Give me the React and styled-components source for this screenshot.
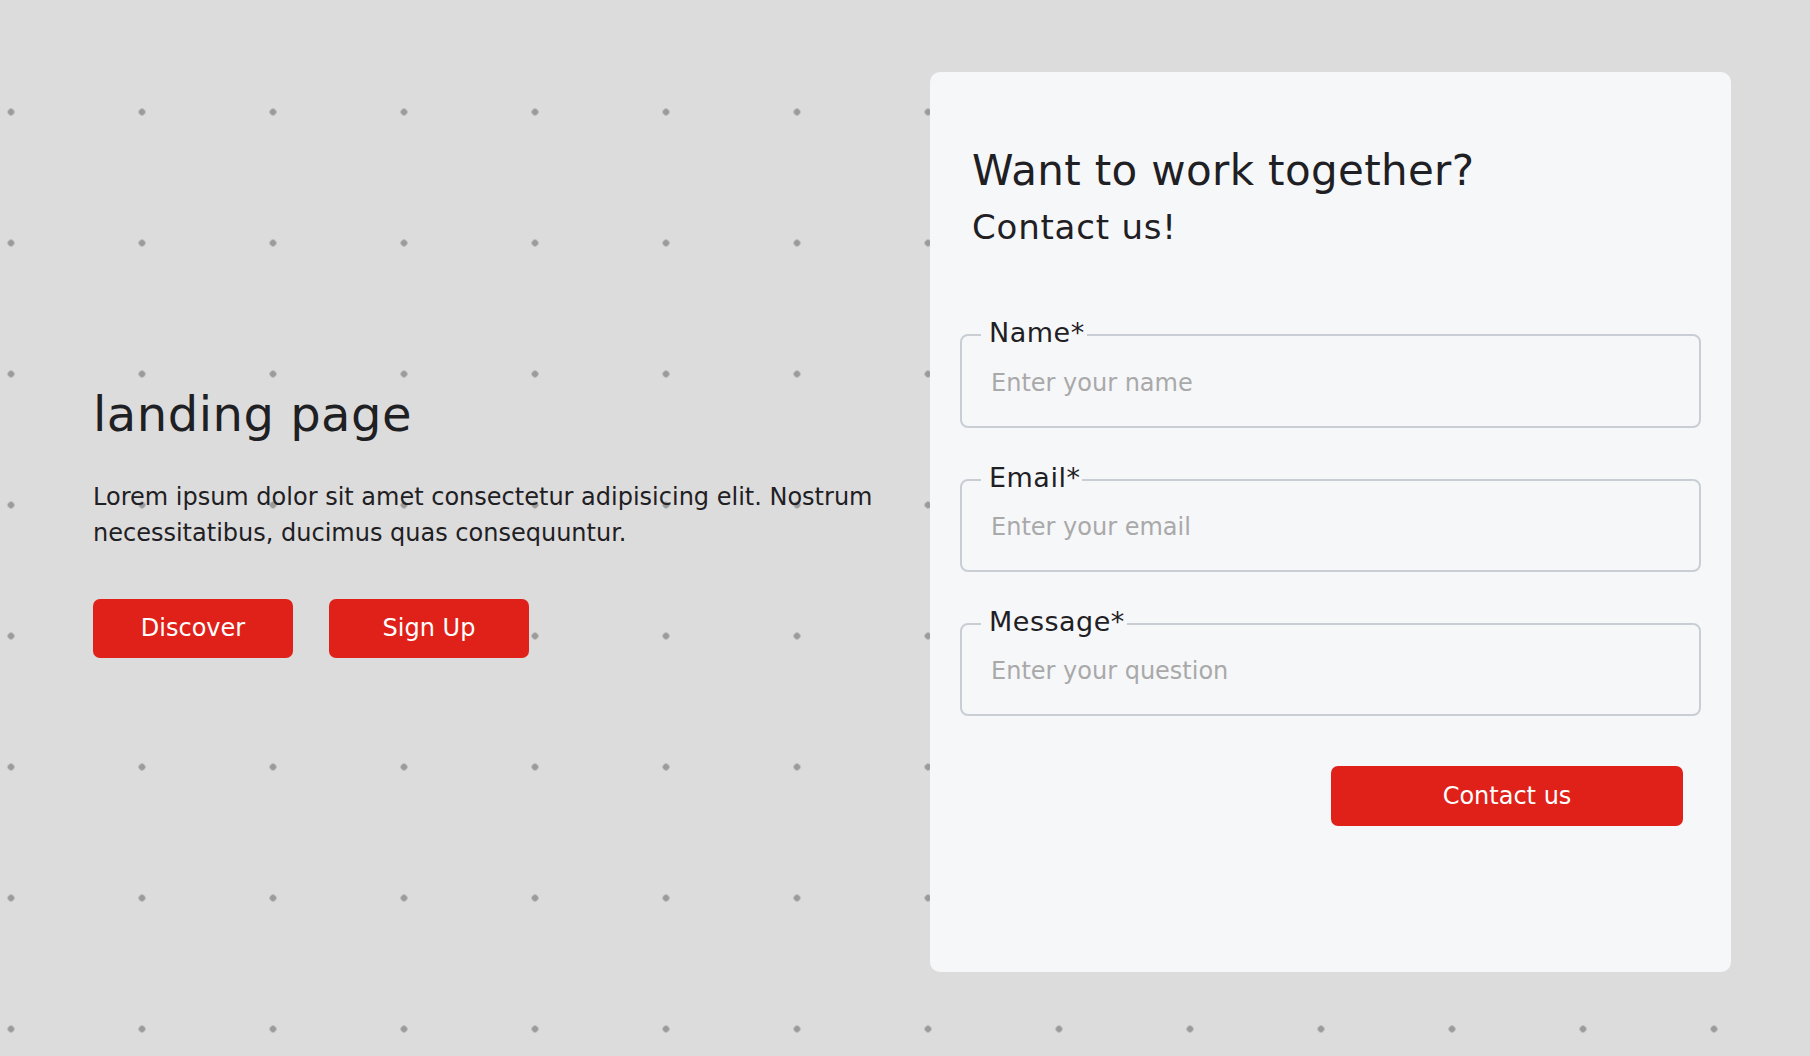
import React from 'react';
import styled, { createGlobalStyle } from 'styled-components';

const FONT = '"DejaVu Sans", "Liberation Sans", sans-serif';
const RED = '#e02119';
const INK = '#1f2023';

const GlobalStyle = createGlobalStyle`
  * {
    box-sizing: border-box;
  }

  html,
  body {
    margin: 0;
    padding: 0;
  }

  body {
    font-family: ${FONT};
    color: ${INK};
    background-color: #dcdcdc;
    background-image: radial-gradient(circle, #9b9b9b 0, #9b9b9b 3px, transparent 3.6px);
    background-size: 131px 131px;
    background-position: -54.5px 46.5px;
  }
`;

const Page = styled.main`
  display: flex;
  align-items: center;
  justify-content: space-between;
  height: 100vh;
  padding: 0 79px 12px 93px;
`;

const Hero = styled.section`
  width: 810px;
`;

const Title = styled.h1`
  margin: 0 0 35px;
  font-size: 48px;
  font-weight: 400;
  line-height: 1.2;
  letter-spacing: 0.5px;
`;

const Lead = styled.p`
  margin: 0 0 48px;
  font-size: 24px;
  line-height: 36px;
`;

const Actions = styled.div`
  display: flex;
  gap: 36px;
`;

const Button = styled.button`
  width: ${({ $wide }) => ($wide ? '352px' : '200px')};
  height: ${({ $wide }) => ($wide ? '60px' : '59px')};
  border: none;
  border-radius: 7px;
  background: ${RED};
  color: #fff;
  font-family: ${FONT};
  font-size: 24px;
  cursor: pointer;
`;

const Card = styled.section`
  width: 801px;
  height: 900px;
  padding: 74px 30px 0;
  border-radius: 10px;
  background: #f6f7f9;
`;

const Heading = styled.h2`
  margin: 0 0 11px 12px;
  font-size: 42px;
  font-weight: 400;
  line-height: 1.2;
  letter-spacing: 0.35px;
`;

const SubHeading = styled.h3`
  margin: 0 0 69px 12px;
  font-size: 34px;
  font-weight: 400;
  line-height: 1.2;
  letter-spacing: 0.8px;
`;

const Form = styled.form`
  display: flex;
  flex-direction: column;
  gap: 34px;
`;

const Field = styled.fieldset`
  margin: 0;
  padding: 0 19px 14px;
  border: 2px solid #c9ced4;
  border-radius: 8px;
`;

const Label = styled.legend`
  padding: 0 2px 4px 8px;
  font-size: 27px;
  line-height: 1.2;
  letter-spacing: 0.5px;
  color: ${INK};
`;

const Input = styled.input`
  display: block;
  width: 100%;
  height: 58px;
  padding: 0 10px;
  border: none;
  outline: none;
  background: transparent;
  font-family: ${FONT};
  font-size: 24px;
  color: ${INK};

  &::placeholder {
    color: #a9a9a9;
  }
`;

const Submit = styled.div`
  display: flex;
  justify-content: flex-end;
  padding: 16px 18px 0 0;
`;

const fields = [
  { id: 'name', label: 'Name*', placeholder: 'Enter your name', type: 'text' },
  { id: 'email', label: 'Email*', placeholder: 'Enter your email', type: 'email' },
  { id: 'message', label: 'Message*', placeholder: 'Enter your question', type: 'text' },
];

const App = () => (
  <>
    <GlobalStyle />
    <Page>
      <Hero>
        <Title>landing page</Title>
        <Lead>
          Lorem ipsum dolor sit amet consectetur adipisicing elit. Nostrum
          necessitatibus, ducimus quas consequuntur.
        </Lead>
        <Actions>
          <Button type="button">Discover</Button>
          <Button type="button">Sign Up</Button>
        </Actions>
      </Hero>

      <Card>
        <Heading>Want to work together?</Heading>
        <SubHeading>Contact us!</SubHeading>
        <Form onSubmit={(e) => e.preventDefault()}>
          {fields.map(({ id, label, placeholder, type }) => (
            <Field key={id}>
              <Label>{label}</Label>
              <Input id={id} name={id} type={type} placeholder={placeholder} />
            </Field>
          ))}
          <Submit>
            <Button type="submit" $wide>
              Contact us
            </Button>
          </Submit>
        </Form>
      </Card>
    </Page>
  </>
);

export default App;
